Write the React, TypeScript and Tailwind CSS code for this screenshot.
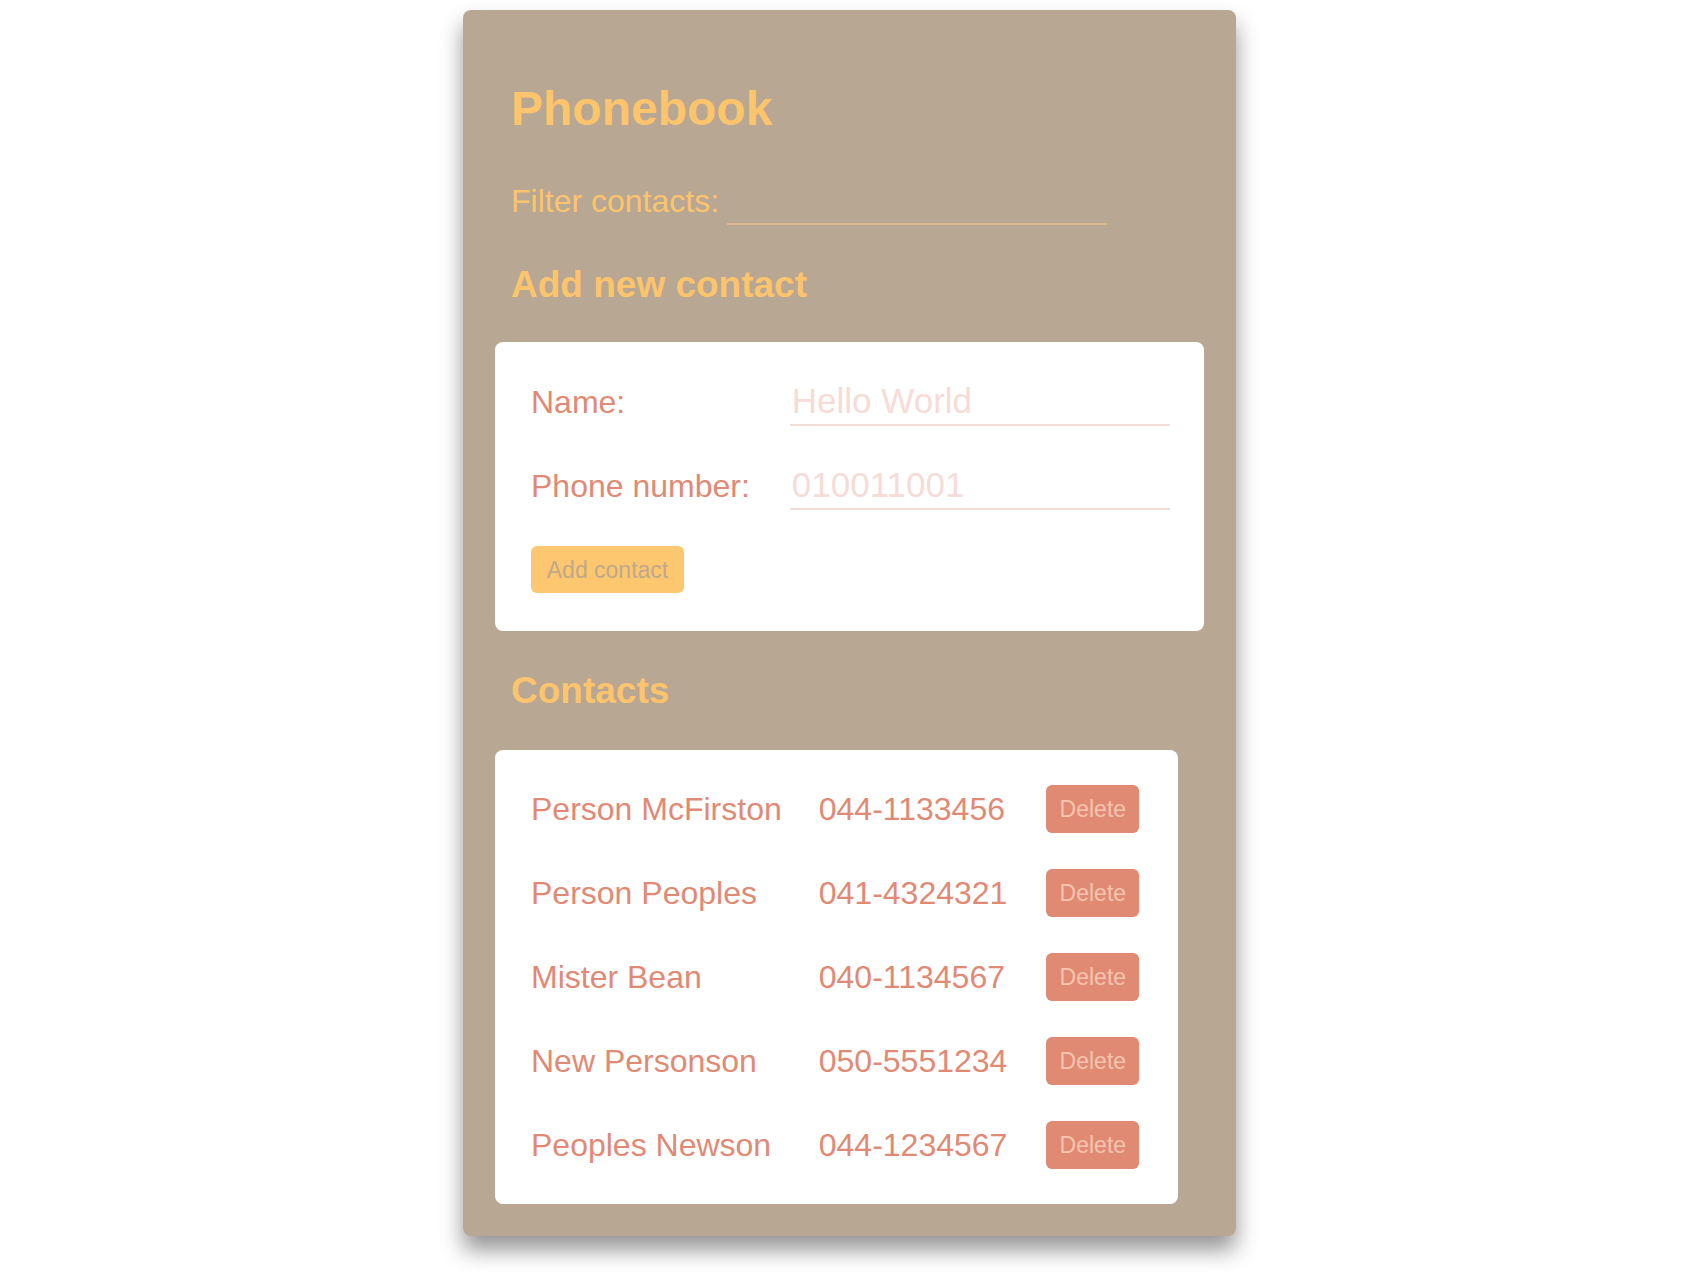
const contacts = [
  { name: "Person McFirston", number: "044-1133456" },
  { name: "Person Peoples", number: "041-4324321" },
  { name: "Mister Bean", number: "040-1134567" },
  { name: "New Personson", number: "050-5551234" },
  { name: "Peoples Newson", number: "044-1234567" },
];

export default function App() {
  return (
    <main className="min-h-screen bg-white pl-[3px] pt-[10px] font-['Liberation_Sans',Arial,sans-serif]">
      <div className="mx-auto w-[773px] rounded-lg bg-[#b8a793] px-8 pb-8 pt-[71px] shadow-[0_14px_22px_rgba(0,0,0,0.42)]">
        <h1 className="px-4 text-[48px] font-bold leading-[56px] text-[#fcc46c]">Phonebook</h1>

        <div className="mt-[40px] flex items-baseline gap-2 px-4">
          <label className="text-[32px] text-[#fcc46c]">Filter contacts:</label>
          <input
            className="h-[48px] w-[380px] border-b-2 border-[#dcb88f] bg-transparent px-[2px] text-[35px] text-[#fcc46c] outline-none"
            type="text"
          />
        </div>

        <h2 className="mt-[38px] px-4 text-[37px] font-bold leading-[44px] text-[#fcc46c]">Add new contact</h2>

        <form className="mt-[35px] rounded-lg bg-white px-4 pb-[20px] pt-[18px]" onSubmit={(e) => e.preventDefault()}>
          <table className="border-collapse">
            <tbody>
              <tr>
                <td className="px-5 py-[18px] align-middle text-[32px] text-[#e08a76]">Name:</td>
                <td className="px-5 py-[18px]">
                  <input
                    className="h-[48px] w-[380px] border-b-2 border-[#f2dcd6] px-[2px] text-[35px] text-[#e08a76] outline-none placeholder:text-[#f5dcd7]"
                    placeholder="Hello World"
                  />
                </td>
              </tr>
              <tr>
                <td className="whitespace-nowrap px-5 py-[18px] align-middle text-[32px] text-[#e08a76]">Phone number:</td>
                <td className="px-5 py-[18px]">
                  <input
                    className="h-[48px] w-[380px] border-b-2 border-[#f2dcd6] px-[2px] text-[35px] text-[#e08a76] outline-none placeholder:text-[#f5dcd7]"
                    placeholder="010011001"
                  />
                </td>
              </tr>
              <tr>
                <td className="px-5 py-[18px]">
                  <button
                    type="submit"
                    className="h-[47px] w-[153px] rounded-md bg-[#fcc76e] text-[23px] text-[#bfa88b]"
                  >
                    Add contact
                  </button>
                </td>
                <td />
              </tr>
            </tbody>
          </table>
        </form>

        <h2 className="mt-[38px] px-4 text-[37px] font-bold leading-[44px] text-[#fcc46c]">Contacts</h2>

        <div className="mt-[37px] w-fit rounded-lg bg-white px-4 py-[17px]">
          <table className="border-collapse">
            <tbody>
              {contacts.map((c) => (
                <tr key={c.name}>
                  <td className="whitespace-nowrap py-[18px] pl-5 pr-[17px] align-middle text-[32px] text-[#e08a76]">{c.name}</td>
                  <td className="whitespace-nowrap py-[18px] pl-5 pr-[19px] align-middle text-[32px] text-[#e08a76]">{c.number}</td>
                  <td className="py-[18px] pl-5 pr-[23px] align-middle">
                    <button className="h-[48px] w-[93px] rounded-md bg-[#e08a74] text-[23px] text-[#f5c4ae]">Delete</button>
                  </td>
                </tr>
              ))}
            </tbody>
          </table>
        </div>
      </div>
    </main>
  );
}
